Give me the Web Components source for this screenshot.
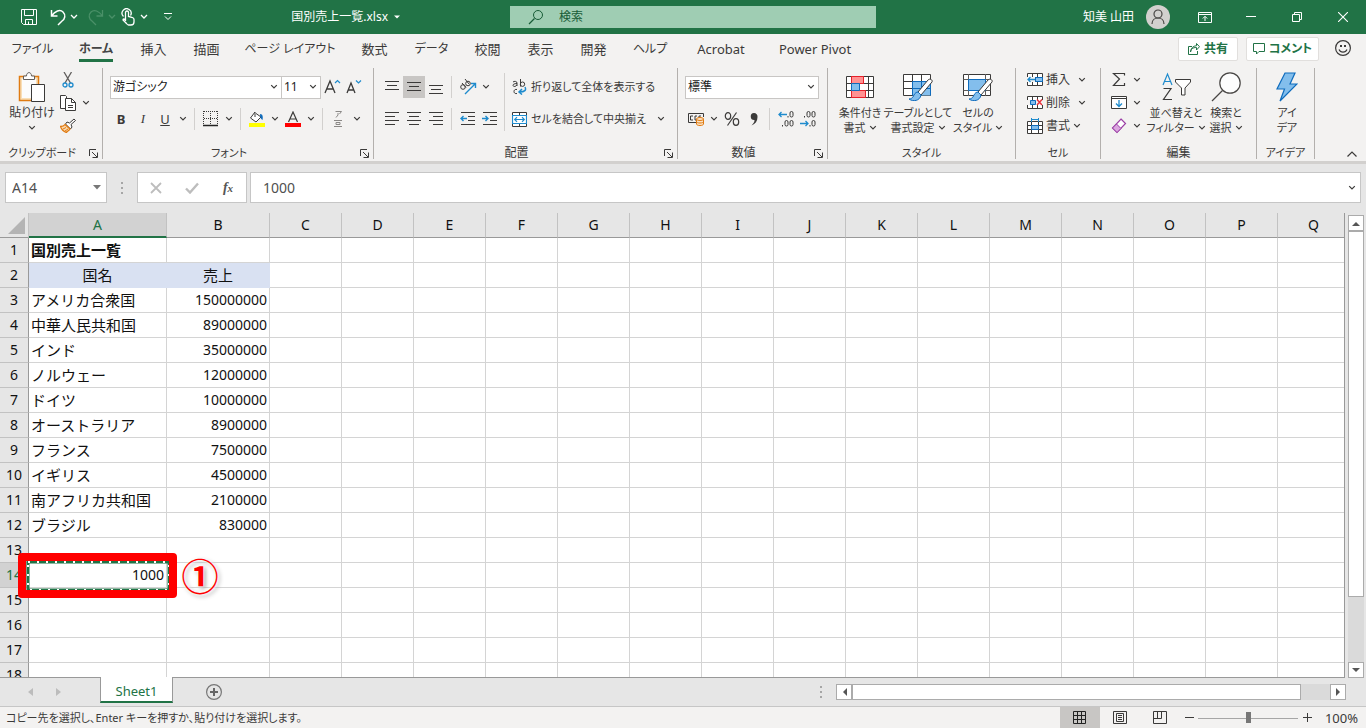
<!DOCTYPE html>
<html lang="ja">
<head>
<meta charset="utf-8">
<title>国別売上一覧.xlsx</title>
<style>
html, body { height: 100%; margin: 0; }
body {
  font: 12px/16px "Noto Sans", "Noto Sans CJK JP", sans-serif;
  font-feature-settings: "palt";
  color: #3b3a39;
  background: #e6e6e6;
  overflow: hidden;
}
</style>
</head>
<body>
<xl-app></xl-app>
<script>
const BASE = `
  *, *::before, *::after { box-sizing: border-box; }
  :host([hidden]) { display: none; }
  button, input, select { font: inherit; color: inherit; margin: 0; padding: 0; border: 0; background: none; border-radius: 0; outline: 0; }
  button { display: flex; align-items: center; justify-content: center; white-space: nowrap; flex: none; }
`;
function define(name, css, html, setup) {
  const tpl = document.createElement('template');
  tpl.innerHTML = `<style>${BASE}${css}</style>${html}`;
  customElements.define(name, class extends HTMLElement {
    constructor() {
      super();
      this.attachShadow({ mode: 'open' }).append(tpl.content.cloneNode(true));
    }
    connectedCallback() { if (setup) setup(this, this.shadowRoot); }
  });
}

const K = '#3b3a39', B = '#1e8bcd', LB = '#83beec', DB = '#0f6cbd';
const lines = (...rows) => rows.map(([x, w, y]) => `<path d="M${x} ${y}.5h${w}" stroke="${K}"/>`).join('');
const brush = `<path d="M27 7L17 19l3 3L31 9c1-2-2-4-4-2z" fill="#fff" stroke="${K}"/><path d="M17 19c-3 0-4 3-5 5-1 1-2 2-4 2 4 3 11 2 12-4z" fill="${LB}" stroke="${DB}"/>`;
const ICONS = {
  save: [16, 16, '<path d="M.5.5h15v15h-13l-2-2zM3.500 .5v6h9v-6M4.500 15.500v-5h7v5M7.500 12.500v3" fill="none" stroke="#fff"/>'],
  undo: [16, 18, '<path d="M1.500 2v6h6M1.500 8C5 3 10 1 13 4s2 7-1 9l-4 4" fill="none" stroke="#fff" stroke-width="1.500"/>'],
  redo: [16, 18, '<path d="M14.500 2v6h-6M14.500 8C11 3 6 1 3 4s-2 7 1 9l4 4" fill="none" stroke="#4a9068" stroke-width="1.300"/>'],
  touch: [14, 18, '<path d="M2.500 8.500a4.500 4.500 0 1 1 7-1M4.500 13V4.500a1.500 1.500 0 0 1 3 0v4l4 1q1.500.5 1.500 2V14q0 3-3 3H7.500q-1 0-2-1.500L2 12q0-2 2.500 0" fill="none" stroke="#fff" stroke-width="1.300"/>'],
  chevw: [8, 6, '<path d="M1 1l3 3 3-3" fill="none" stroke="#fff" stroke-width="1.300"/>'],
  chevd: [8, 6, '<path d="M1 1l3 3 3-3" fill="none" stroke="#4a9068" stroke-width="1.300"/>'],
  custom: [8, 8, '<path d="M0 .5h8" stroke="#fff"/><path d="M1 3.500l3 3 3-3" fill="none" stroke="#fff"/>'],
  tri: [6, 4, '<path d="M0 .5h6L3 3.500z" fill="#fff"/>'],
  search: [16, 16, '<circle cx="10" cy="6" r="4.500" fill="none" stroke="#185c37"/><path d="M6.500 9.500L1 15" stroke="#185c37" stroke-width="1.200"/>'],
  user: [24, 24, '<circle cx="12" cy="12" r="12" fill="#d2d0ce"/><circle cx="12" cy="9" r="4" fill="none" stroke="#484644" stroke-width="1.200"/><path d="M6 19c0-8 12-8 12 0" fill="none" stroke="#484644" stroke-width="1.200"/>'],
  ribbonopt: [14, 11, '<path d="M.5.5h13v10H.5zM.5 2.500h13M7 9V4.500M4.800 6.500L7 4.300l2.200 2.200" fill="none" stroke="#fff"/>'],
  min: [10, 10, '<path d="M0 4.500h10" stroke="#fff"/>'],
  restore: [10, 10, '<path d="M.5 2.500h7v7h-7zM2.500 2.500v-2h7v7h-2" fill="none" stroke="#fff"/>'],
  close: [10, 10, '<path d="M0 0l10 10M10 0L0 10" stroke="#fff" stroke-width="1.100"/>'],
  share: [12, 12, '<path d="M4 3.500H.5v8h9V8M2.500 9c.5-3 2-4.500 6-4.500V7l3-3.300L8.500.5v2.200C5 3 3 5 2.500 9z" fill="none" stroke="#217346"/>'],
  comment: [12, 12, '<path d="M.5.5h11v8H6L3.500 11V8.500h-3z" fill="none" stroke="#217346"/>'],
  smile: [16, 16, `<circle cx="8" cy="8" r="7.400" fill="none" stroke="${K}" stroke-width="1.200"/><path d="M5 5h2v2H5zM9 5h2v2H9z" fill="${K}"/><path d="M4 9.500c1.500 3.500 6.500 3.500 8 0" fill="none" stroke="${K}" stroke-width="1.200"/>`],
  chev: [8, 6, `<path d="M1.200 1.200L4 4l2.800-2.800" fill="none" stroke="${K}" stroke-width="1.200"/>`],
  up: [10, 6, `<path d="M.5 5.500L5 1l4.500 4.500" fill="none" stroke="${K}" stroke-width="1.200"/>`],
  launch: [9, 9, `<path d="M.5 7V.5H7M3 3l5 5M8.500 3.500v5h-5" fill="none" stroke="${K}"/>`],
  paste: [28, 30, `<path d="M1.500 4.500h19v24h-19z" fill="#f9dfb8" stroke="#e07b12" stroke-width="1.500"/><path d="M4 7h14v19H4z" fill="#fcfcfc"/><path d="M5.500 7.500V4h3c0-4.500 5-4.500 5 0h3v3.500z" fill="#fff" stroke="#605e5c"/><path d="M13.500 12.500h13v17h-13z" fill="#fff" stroke="${K}"/>`],
  cut: [12, 16, `<path d="M2 0l6.500 11M9.500 0L3 11" stroke="#605e5c" stroke-width="1.300" fill="none"/><circle cx="3" cy="13" r="2" fill="none" stroke="${B}" stroke-width="1.300"/><circle cx="9" cy="13" r="2" fill="none" stroke="${B}" stroke-width="1.300"/>`],
  copy: [16, 16, `<path d="M5.500 13.500h-5v-13h5l1 1v1.500" fill="#fff" stroke="${K}"/><path d="M5.500 3.500h6l4 4v8h-10z" fill="#fff" stroke="${K}"/><path d="M11.500 3.500v4h4M8 10.500h5M8 12.500h5" fill="none" stroke="${K}"/>`],
  painter: [16, 15, `<path d="M14 1L9.500 5 7 4 5.500 6l5 5L12 9l-1-2.500L15.500 2.500z" fill="#fff" stroke="${K}"/><path d="M5 6.500C4 8 2.500 8.500.5 8.500c1 3 3 5 6 6 0-1 3-2 3.500-3.500z" fill="#fbd9ae" stroke="#e07b12" stroke-width="1.300"/><path d="M3 11l3-1.500M5 13l3-2" stroke="#e07b12"/>`],
  grow: [17, 16, `<path d="M1 14L6 2l5 12M3 10h6" fill="none" stroke="${K}" stroke-width="1.300"/><path d="M11 4l2.500-2.500L16 4" fill="none" stroke="${B}" stroke-width="1.200"/>`],
  shrink: [16, 16, `<path d="M1 14L5 4l4 10M2.500 11h5" fill="none" stroke="${K}" stroke-width="1.300"/><path d="M10 1.500L12.500 4 15 1.500" fill="none" stroke="${B}" stroke-width="1.200"/>`],
  border: [16, 16, `<path d="M1 .5h14M1 7.500h14M.5 0v14M7.500 0v14M14.500 0v14" stroke="${K}" stroke-dasharray="1 1"/><path d="M0 14.500h15" stroke="#222" stroke-width="1.500"/>`],
  fill: [18, 16, `<path d="M7 1L2.500 7 8 11l5-5-5-3.500M7 1v5" fill="#fff" stroke="${K}"/><path d="M12 3c3 0 3 3 2.500 6-2-1-2.500-3-2.500-6z" fill="${DB}"/><path d="M1 12h16v4H1z" fill="#ff0"/>`],
  color: [16, 16, `<path d="M3.500 11L8 1l4.500 10M5 8h6" fill="none" stroke="${K}" stroke-width="1.200"/><path d="M0 12h16v4H0z" fill="red"/>`],
  ruby: [10, 18, '<path d="M1.500 1.500h6L5.500 4M4 3v2L2 7.500M0 10.500h8M2 12.500h4v2H2zM0 16.500h8" fill="none" stroke="#8a8886"/>'],
  top: [16, 16, lines([1, 14, 2], [3, 10, 6], [1, 14, 10])],
  mid: [16, 16, lines([1, 14, 3], [3, 10, 7], [1, 14, 11])],
  bot: [16, 16, lines([1, 14, 6], [3, 10, 10], [1, 14, 14])],
  left: [16, 16, lines([1, 14, 1], [1, 10, 5], [1, 14, 9], [1, 10, 13])],
  center: [16, 16, lines([1, 14, 1], [3, 10, 5], [1, 14, 9], [3, 10, 13])],
  right: [16, 16, lines([1, 14, 1], [5, 10, 5], [1, 14, 9], [5, 10, 13])],
  orient: [18, 16, `<circle cx="4" cy="8" r="2.300" fill="none" stroke="${K}"/><path d="M3 4l4 4.500M6 0l4 5" stroke="${K}"/><circle cx="9" cy="4.500" r="2.300" fill="none" stroke="${K}"/><path d="M6 15L16 5M12 4.500h4.500V9" fill="none" stroke="${B}" stroke-width="1.400"/>`],
  outdent: [16, 14, `${lines([1, 14, 0], [8, 7, 4], [8, 7, 8], [1, 14, 12])}<path d="M1 6.500h6M3.500 4L1 6.500 3.500 9" fill="none" stroke="${B}" stroke-width="1.400"/>`],
  indent: [16, 14, `${lines([1, 14, 0], [8, 7, 4], [8, 7, 8], [1, 14, 12])}<path d="M0 6.500h6M3.500 4L6 6.500 3.500 9" fill="none" stroke="${B}" stroke-width="1.400"/>`],
  wrap: [15, 16, `<path d="M1 3c1-1 4-1 4 1v3M5 4.500c-5 0-5 3-2 3l2-1.500M8.500 0v7.500" fill="none" stroke="${K}"/><circle cx="10.500" cy="5.200" r="2.200" fill="none" stroke="${K}"/><path d="M5 10.500c-4-1-4 5 0 4" fill="none" stroke="${K}"/><path d="M13 8c1.500 3 0 5-5.500 5M10 10l-3 3 3 2.500" fill="none" stroke="${B}" stroke-width="1.500"/>`],
  merge: [15, 15, `<path d="M.5.5h14v14H.5z" fill="#fff" stroke="${K}"/><path d="M7.500 0v4M7.500 11v4" stroke="${K}"/><path d="M.5 3.500h14v8H.5z" fill="#fff" stroke="${B}" stroke-width="1.200"/><path d="M3 7.500h9M5 5.200L2.700 7.500 5 9.800M10 5.200l2.300 2.300L10 9.800" fill="none" stroke="${B}" stroke-width="1.200"/>`],
  money: [17, 14, `<path d="M8 10.500H.5v-9h15V5" fill="none" stroke="${K}"/><path d="M5 4H2.500v4H5M9 8H7V4h2M13 4h-2v2" fill="none" stroke="${K}"/><path d="M8.500 7v5c0 2 7 2 7 0V7z" fill="#fce3c4" stroke="#e07b12"/><ellipse cx="12" cy="7" rx="3.500" ry="1.500" fill="#fce3c4" stroke="#e07b12"/><path d="M8.500 9.500c0 2 7 2 7 0" fill="none" stroke="#e07b12"/>`],
  comma: [10, 14, `<path d="M5 1a3.500 3.500 0 0 1 3.500 4c0 4-2 7-6 8.500 2-2 3-3.500 3-5.500A3.500 3.500 0 1 1 5 1z" fill="${K}"/>`],
  percent: [16, 16, `<ellipse cx="4" cy="5" rx="2.700" ry="3.300" fill="none" stroke="${K}" stroke-width="1.200"/><ellipse cx="12" cy="11" rx="2.700" ry="3.300" fill="none" stroke="${K}" stroke-width="1.200"/><path d="M12.500 1.500l-9 13" stroke="${K}" stroke-width="1.200"/>`],
  decinc: [16, 16, `<path d="M1 3.500h8M3.500 1L1 3.500 3.500 6" fill="none" stroke="${B}" stroke-width="1.300"/><rect x="12" y=".5" width="3" height="5.500" rx="1.500" fill="none" stroke="${K}"/><rect x="7" y="9.500" width="3" height="5.500" rx="1.500" fill="none" stroke="${K}"/><rect x="12" y="9.500" width="3" height="5.500" rx="1.500" fill="none" stroke="${K}"/><path d="M4 14h1v1.500H4zM9.500 5h1v1.500h-1z" fill="${K}"/>`],
  decdec: [16, 16, `<path d="M0 12.500h8M5.500 10L8 12.500 5.500 15" fill="none" stroke="${B}" stroke-width="1.300"/><rect x="7" y=".5" width="3" height="5.500" rx="1.500" fill="none" stroke="${K}"/><rect x="12" y=".5" width="3" height="5.500" rx="1.500" fill="none" stroke="${K}"/><rect x="12" y="9.500" width="3" height="5.500" rx="1.500" fill="none" stroke="${K}"/><path d="M4 5h1v1.500H4zM9.500 14h1v1.500h-1z" fill="${K}"/>`],
  cond: [28, 24, `<path d="M.5 1.500h27v21H.5z" fill="#fff" stroke="${K}"/><path d="M5.500 1v22M22.500 1v22M.5 8.500h27M.5 15.500h27" stroke="${K}"/><path d="M5.500 1.500h12v7h-12zM5.500 15.500h14v7h-14z" fill="#ff9292" stroke="#e8202a"/><path d="M5.500 8.500h8v7h-8z" fill="${LB}" stroke="${DB}"/>`],
  table: [34, 28, `<path d="M2.500 1.500h27v21h-27z" fill="#fff" stroke="${K}"/><path d="M11.500 8.500h18v14h-18z" fill="${LB}"/><path d="M11.500 1v22M20.500 1v7M2.500 8.500h9M2.500 15.500h9" stroke="${K}"/><path d="M11.500 22.500v-14h18v14M20.500 8.500v14M11.500 15.500h18" stroke="${DB}" fill="none"/>${brush}`],
  style: [34, 28, `<path d="M2.500 1.500h27v21h-27z" fill="#fff" stroke="${K}"/><path d="M2.500 6.500h27M2.500 17.500h27M7.500 1v22M24.500 1v22" stroke="#605e5c"/><path d="M7.500 6.500h17v11h-17z" fill="${LB}" stroke="${DB}"/>${brush}`],
  ins: [16, 15, `<path d="M.5 1.500h15v12H.5zM.5 5.500h15M.5 9.500h15M5.500 1v12M10.500 1v12" fill="#fff" stroke="${K}"/><path d="M8.500 5.500h7v4h-7z" fill="${LB}" stroke="${DB}"/><path d="M0 5h8v5H0z" fill="#f3f2f1"/><path d="M1 7.500h7M3.500 5L1 7.500 3.500 10" fill="none" stroke="${B}" stroke-width="1.300"/>`],
  del: [16, 15, `<path d="M.5 1.500h15v12H.5zM.5 5.500h15M.5 9.500h15M5.500 1v12M10.500 1v12" fill="#fff" stroke="${K}"/><path d="M0 5h16v5H0z" fill="#f3f2f1"/><path d="M3.500 5.500h5v4h-5z" fill="${LB}" stroke="${DB}"/><path d="M10 4.500l5 5.500M15 4.500L10 10" stroke="#e8303a" stroke-width="1.400"/>`],
  fmt: [16, 16, `<path d="M.5 3.500h15v12H.5zM.5 7.500h15M.5 11.500h15M4.500 3v12M11.500 3v12" fill="#fff" stroke="${K}"/><path d="M4.500 7.500h7v4h-7z" fill="${LB}" stroke="${DB}"/><path d="M4 1.500h8M4.500 0v4M11.500 0v4" stroke="${B}"/>`],
  sum: [14, 15, `<path d="M12.500 3.500v-2h-11L7.500 7l-6 6.500h11v-2.500" fill="none" stroke="${K}" stroke-width="1.200"/>`],
  down: [16, 15, `<path d="M.5 1.500h15v12H.5zM.5 3.500h15" fill="#fff" stroke="${K}"/><path d="M8 5v6.500M5 8.500l3 3 3-3" fill="none" stroke="${B}" stroke-width="1.300"/>`],
  erase: [16, 16, '<path d="M10 1l4.500 4.500-8.500 9L1.500 10z" fill="#fff" stroke="#9b3fa5" stroke-width="1.200"/><path d="M5.500 6l4.500 4.500-4 4L1.500 10z" fill="#dba6e0" stroke="#9b3fa5"/>'],
  sort: [30, 30, `<path d="M2 13L6.500 2 11 13M3.500 9.500h6" fill="none" stroke="${B}" stroke-width="1.200"/><path d="M2.500 16.500H10L2.500 27.500H11" fill="none" stroke="${K}" stroke-width="1.200"/><path d="M14.500 7.500h15v2.500L24 16v7h-3.500v-7L14.500 10z" fill="#fff" stroke="${K}"/>`],
  find: [30, 30, `<circle cx="19" cy="11" r="10.200" fill="#fdfdfd" stroke="#484644" stroke-width="1.200"/><path d="M11.500 18.500L1 29" stroke="#484644" stroke-width="1.300"/>`],
  idea: [22, 30, `<path d="M9 1h10l-5 11h7L4 29l4.500-12H1z" fill="${LB}" stroke="${DB}" stroke-width="1.200"/>`],
  nbtri: [8, 5, '<path d="M0 0h8L4 4.500z" fill="#777"/>'],
  dots: [3, 12, '<path d="M0 0h2v2H0zM0 5h2v2H0zM0 10h2v2H0z" fill="#a6a6a6"/>'],
  cancel: [12, 12, '<path d="M1 1l10 10M11 1L1 11" stroke="#bdbdbd" stroke-width="1.800"/>'],
  check: [14, 12, '<path d="M1 6.500L5 10.500 13 1.500" fill="none" stroke="#bdbdbd" stroke-width="2.400"/>'],
  corner: [17, 17, '<path d="M17 0v17H0z" fill="#b4b4b4"/>'],
  navl: [5, 8, '<path d="M5 0v8L0 4z" fill="#bcbcbc"/>'],
  navr: [5, 8, '<path d="M0 0v8l5-4z" fill="#bcbcbc"/>'],
  sl: [5, 8, '<path d="M5 0v8L1 4z" fill="#555"/>'],
  sr: [5, 8, '<path d="M0 0v8l4-4z" fill="#555"/>'],
  su: [8, 5, '<path d="M0 5h8L4 1z" fill="#555"/>'],
  sd: [8, 5, '<path d="M0 0h8L4 4z" fill="#555"/>'],
  add: [16, 16, '<circle cx="8" cy="8" r="7.400" fill="none" stroke="#777" stroke-width="1.200"/><path d="M4 8h8M8 4v8" stroke="#666" stroke-width="2"/>'],
  vnorm: [14, 14, '<path d="M.5.5h12v12H.5zM.5 4.500h12M.5 8.500h12M4.500.5v12M8.500.5v12" fill="none" stroke="#222"/>'],
  vpage: [14, 14, `<path d="M.5.5h13v12H.5zM3.500 2.500h7v8h-7zM5 4.500h4M5 6.500h4M5 8.500h4" fill="none" stroke="${K}"/>`],
  vbreak: [14, 14, `<path d="M.5.5h13v12H.5zM.5 7.500h8v-7M4.500.5v7" fill="none" stroke="${K}"/>`],
  minus: [9, 9, `<path d="M0 4.500h9" stroke="${K}"/>`],
  plus: [9, 9, `<path d="M0 4.500h9M4.500 0v9" stroke="${K}"/>`],
};
customElements.define('xl-icon', class extends HTMLElement {
  constructor() { super(); this.attachShadow({ mode: 'open' }); }
  connectedCallback() {
    const [w, h, body] = ICONS[this.getAttribute('name')];
    this.shadowRoot.innerHTML = `<style>:host{display:block;flex:none}svg{display:block}</style>
      <svg width="${w}" height="${h}" viewBox="0 0 ${w} ${h}" aria-hidden="true">${body}</svg>`;
  }
});
const icon = n => `<xl-icon name="${n}"></xl-icon>`;
const btn = (n, label, cls = '') => `<button type="button" class="b ${cls}" aria-label="${label}">${icon(n)}</button>`;
const drop = (label, n = 'chev') => `<button type="button" class="c" aria-label="${label}">${icon(n)}</button>`;

/* Title bar */
define('xl-titlebar', `
  :host { display: grid; grid-template-columns: 510px minmax(0, 366px) 1fr; height: 34px; background: #217346; color: #fff; align-items: center; }
  .left, .qat, .set, .right { display: flex; align-items: center; }
  .left { justify-content: space-between; padding: 0 110px 0 19px; }
  .qat { gap: 6px; }
  .b { width: 20px; height: 24px; }
  .c { width: 12px; height: 24px; }
  .qat > .b { margin-right: 3px; }
  .qat > .c { margin-left: 6px; }
  .file { gap: 6px; }
  .search { display: flex; align-items: center; gap: 15px; height: 22px; padding: 0 18px; background: #9fcdb3; color: #185c37; }
  .search input { flex: 1; min-width: 0; }
  .search input::placeholder { color: #185c37; opacity: 1; }
  .right { justify-content: flex-end; }
  .user { gap: 12px; margin-right: 12px; }
  .w { width: 46px; height: 34px; }
`, `
  <div class="left">
    <div class="qat">${btn('save', '上書き保存')}<span class="set">${btn('undo', '元に戻す')}${drop('元に戻す一覧', 'chevw')}</span><span class="set">${btn('redo', 'やり直し')}${drop('やり直し一覧', 'chevd')}${btn('touch', 'タッチ/マウス モード')}${drop('モード一覧', 'chevw')}</span>${drop('クイック アクセスのカスタマイズ', 'custom')}</div>
    <button type="button" class="file">国別売上一覧.xlsx ${icon('tri')}</button>
  </div>
  <label class="search">${icon('search')}<input type="search" placeholder="検索" aria-label="検索"></label>
  <div class="right">
    <button type="button" class="user">知美 山田 ${icon('user')}</button>
    <button type="button" class="w" aria-label="リボンの表示オプション">${icon('ribbonopt')}</button>
    <button type="button" class="w" aria-label="最小化">${icon('min')}</button>
    <button type="button" class="w" aria-label="元に戻す">${icon('restore')}</button>
    <button type="button" class="w" aria-label="閉じる">${icon('close')}</button>
  </div>
`);

/* Ribbon tabs */
define('xl-tabs', `
  :host { display: flex; justify-content: space-between; height: 32px; background: #f3f2f1; font-size: 13px; }
  nav { display: grid; grid-template-columns: 65px 62px 53px 53px 114px 55px 59px 53px 53px 53px 60px 82px 106px; }
  nav a { display: flex; justify-content: center; color: inherit; text-decoration: none; white-space: nowrap; padding-top: 7px; }
  nav a.k { font-size: 12px; }
  nav a.on { font-weight: 700; color: #444; }
  nav a.on span { border-bottom: 3px solid #217346; height: 21px; }
  .act { display: flex; align-items: center; gap: 8px; padding: 0 15px 2px 0; }
  .act button { width: 60px; height: 24px; gap: 4px; background: #fff; border: 1px solid #e1dfdd; border-radius: 2px; color: #217346; font-weight: 700; font-size: 12px; }
  .act .cm { width: 73px; }
  .act button:last-child { background: none; border: 0; width: auto; padding: 0 0 2px 8px; }
`, `
  <nav><a href="#file" class="k"><span>ファイル</span></a><a href="#home" class="k on"><span>ホーム</span></a><a href="#insert"><span>挿入</span></a><a href="#draw"><span>描画</span></a><a href="#layout" class="k"><span>ページ レイアウト</span></a><a href="#formula"><span>数式</span></a><a href="#data" class="k"><span>データ</span></a><a href="#review"><span>校閲</span></a><a href="#view"><span>表示</span></a><a href="#dev"><span>開発</span></a><a href="#help" class="k"><span>ヘルプ</span></a><a href="#acrobat"><span>Acrobat</span></a><a href="#pivot"><span>Power Pivot</span></a></nav>
  <div class="act"><button type="button">${icon('share')}共有</button><button type="button" class="cm">${icon('comment')}コメント</button><button type="button" aria-label="フィードバック">${icon('smile')}</button></div>
`);

/* Ribbon group: content slot over a caption */
define('xl-group', `
  :host { display: flex; flex-direction: column; flex: none; border-right: 1px solid #b3b0ad; height: 91px; }
  .body { flex: 1; display: flex; min-height: 0; padding: 0 7px; }
  .cap { display: flex; align-items: center; height: 12px; line-height: 12px; white-space: nowrap; }
  .cap.k { font-size: 11px; }
  .cap span { flex: 1; text-align: center; }
  .cap button { width: 18px; }
`, `<div class="body"><slot></slot></div><div class="cap"><span></span><button type="button" aria-label="詳細">${icon('launch')}</button></div>`,
(host, root) => {
  const label = host.getAttribute('label');
  root.querySelector('span').textContent = label;
  root.querySelector('.cap').classList.toggle('k', /^[ァ-ー]+$/.test(label));
  if (!host.hasAttribute('launcher')) root.querySelector('button')?.remove();
});

const combo = (id, label, text, cls) => `<span class="sel ${cls}"><select id="${id}" aria-label="${label}"><option>${text}</option></select>${icon('chev')}</span>`;
const big = (w, name, a, b, arrow = true) => `<button type="button" class="big ${w}"><span class="ic">${icon(name)}</span><span class="ln">${a}</span><span class="ln">${b}${arrow ? icon('chev') : ''}</span></button>`;
define('xl-ribbon', `
  :host { display: flex; justify-content: space-between; align-items: flex-end; background: #f3f2f1; padding-top: 2px; height: 98px; border-bottom: 3px solid #d2d0ce; }
  .groups { display: flex; height: 100%; }
  .row { display: flex; align-items: center; height: 24px; }
  .rows { display: flex; flex-direction: column; gap: 8px; padding-top: 7px; }
  .b { width: 22px; height: 22px; }
  .b.on { background: #c8c6c4; }
  .c { width: 14px; height: 22px; }
  .s { width: 1px; height: 22px; margin: 0 5px 0 4px; background: #d2d0ce; }
  .tall { height: 58px; margin: 5px 7px 0 3px; }
  .sel { display: flex; align-items: center; height: 23px; border: 1px solid #c8c6c4; background: #fff; padding-right: 3px; }
  .sel select { appearance: none; flex: 1; min-width: 0; padding-left: 2px; height: 100%; color: #222; }
  .big { flex-direction: column; justify-content: flex-start; line-height: 15px; font-size: 11px; }
  .big .ic { display: flex; align-items: center; justify-content: center; height: 37px; }
  .big .ln { display: flex; align-items: center; gap: 3px; height: 15px; }
  .w46 { width: 46px; } .w50 { width: 50px; } .w54 { width: 54px; } .w66 { width: 66px; }
  .mini { display: flex; flex-direction: column; }
  .mini .row { height: 23px; }
  .cells { padding-left: 4px; }
  .cells .row { gap: 5px; }
  .edit { width: 41px; }
  .t { gap: 3px; }
  .t.k { font-size: 11px; gap: 4px; margin-right: 8px; }
  .name { width: 172px; } .size { width: 40px; margin-left: -1px; } .num { width: 134px; }
  .glyph { font-size: 13px; }
  .collapse { width: 28px; height: 14px; }
`, `
  <div class="groups">
    <xl-group label="クリップボード" launcher style="width:103px">
      <button type="button" class="big w50" style="font-size:12px"><span class="ic">${icon('paste')}</span><span class="ln">貼り付け</span><span class="ln">${icon('chev')}</span></button>
      <div class="mini"><div class="row">${btn('cut', '切り取り')}</div><div class="row">${btn('copy', 'コピー')}${drop('コピー一覧')}</div><div class="row">${btn('painter', '書式のコピー/貼り付け')}</div></div>
    </xl-group>
    <xl-group label="フォント" launcher style="width:271px">
      <div class="rows">
        <div class="row">${combo('fn', 'フォント名', '游ゴシック', 'name')}${combo('fs', 'サイズ', '11', 'size')}${btn('grow', 'フォント サイズの拡大')}${btn('shrink', 'フォント サイズの縮小')}</div>
        <div class="row"><button type="button" class="b glyph"><b>B</b></button><button type="button" class="b glyph" style="font-family:'Liberation Serif'"><i>I</i></button><button type="button" class="b glyph"><u>U</u></button>${drop('下線')}<i class="s"></i>${btn('border', '罫線')}${drop('罫線一覧')}<i class="s"></i>${btn('fill', '塗りつぶしの色')}${drop('塗りつぶしの色一覧')}${btn('color', 'フォントの色')}${drop('フォントの色一覧')}<i class="s"></i>${btn('ruby', 'ふりがな')}${drop('ふりがな一覧')}</div>
      </div>
    </xl-group>
    <xl-group label="配置" launcher style="width:304px">
      <div class="rows">
        <div class="row">${btn('top', '上揃え')}${btn('mid', '上下中央揃え', 'on')}${btn('bot', '下揃え')}<i class="s"></i>${btn('orient', '方向')}${drop('方向一覧')}</div>
        <div class="row">${btn('left', '左揃え')}${btn('center', '中央揃え')}${btn('right', '右揃え')}<i class="s"></i>${btn('outdent', 'インデントを減らす')}${btn('indent', 'インデントを増やす')}</div>
      </div>
      <i class="s tall"></i>
      <div class="rows">
        <div class="row"><button type="button" class="t k">${icon('wrap')}折り返して全体を表示する</button></div>
        <div class="row"><button type="button" class="t k">${icon('merge')}セルを結合して中央揃え</button>${drop('結合一覧')}</div>
      </div>
    </xl-group>
    <xl-group label="数値" launcher style="width:150px">
      <div class="rows">
        <div class="row">${combo('nf', '表示形式', '標準', 'num')}</div>
        <div class="row">${btn('money', '通貨表示形式')}${drop('通貨一覧')}${btn('percent', 'パーセント スタイル')}${btn('comma', '桁区切りスタイル')}<i class="s"></i>${btn('decinc', '小数点以下の表示桁数を増やす')}${btn('decdec', '小数点以下の表示桁数を減らす')}</div>
      </div>
    </xl-group>
    <xl-group label="スタイル" style="width:188px">${big('w50', 'cond', '条件付き', '書式')}${big('w66', 'table', 'テーブルとして', '書式設定')}${big('w54', 'style', 'セルの', 'スタイル')}</xl-group>
    <xl-group label="セル" style="width:85px">
      <div class="mini cells">
        <div class="row"><button type="button" class="t">${icon('ins')}挿入</button>${drop('挿入一覧')}</div>
        <div class="row"><button type="button" class="t">${icon('del')}削除</button>${drop('削除一覧')}</div>
        <div class="row"><button type="button" class="t">${icon('fmt')}書式${icon('chev')}</button></div>
      </div>
    </xl-group>
    <xl-group label="編集" style="width:156px">
      <div class="mini edit"><div class="row">${btn('sum', '合計')}${drop('合計一覧')}</div><div class="row">${btn('down', 'フィル')}${drop('フィル一覧')}</div><div class="row">${btn('erase', 'クリア')}${drop('クリア一覧')}</div></div>
      ${big('w54', 'sort', '並べ替えと', 'フィルター')}${big('w46', 'find', '検索と', '選択')}
    </xl-group>
    <xl-group label="アイデア" style="width:58px">${big('w46', 'idea', 'アイ', 'デア', false)}</xl-group>
  </div>
  <button type="button" class="collapse" aria-label="リボンを折りたたむ">${icon('up')}</button>
`);

/* Formula bar */
define('xl-formula-bar', `
  :host { display: flex; align-items: center; height: 49px; padding: 0 5px 2px; background: #e6e6e6; font-size: 14px; color: #505050; }
  .box { display: flex; align-items: center; height: 31px; background: #fff; border: 1px solid #c6c6c6; }
  .box input { flex: 1; min-width: 0; height: 100%; }
  .name { width: 102px; padding: 0 5px 0 6px; }
  .dots { width: 30px; display: flex; justify-content: center; }
  .fx { width: 110px; margin-right: 3px; }
  .fx button { width: 36px; height: 29px; }
  .fx i { font: italic 700 14px/16px "Liberation Serif", serif; color: #555; }
  .fx small { font-size: 11px; }
  .val { flex: 1; padding: 0 4px 0 12px; }
`, `
  <span class="box name"><input id="nb" value="A14" aria-label="名前ボックス">${icon('nbtri')}</span>
  <span class="dots">${icon('dots')}</span>
  <span class="box fx"><button type="button" aria-label="キャンセル">${icon('cancel')}</button><button type="button" aria-label="入力">${icon('check')}</button><button type="button" aria-label="関数の挿入"><i>f<small>x</small></i></button></span>
  <span class="box val"><input id="fv" value="1000" aria-label="数式バー">${icon('chev')}</span>
`);

/* Worksheet grid */
const ROWS = [
  ['アメリカ合衆国', '150000000'], ['中華人民共和国', '89000000'], ['インド', '35000000'], ['ノルウェー', '12000000'],
  ['ドイツ', '10000000'], ['オーストラリア', '8900000'], ['フランス', '7500000'], ['イギリス', '4500000'],
  ['南アフリカ共和国', '2100000'], ['ブラジル', '830000'],
];
const COLS = [...'ABCDEFGHIJKLMNOPQ'];
const rest = '<td></td>'.repeat(COLS.length - 2);
function cells(n) {
  if (n === 1) return `<td class="ttl">国別売上一覧</td><td></td>`;
  if (n === 2) return `<td class="hd">国名</td><td class="hd">売上</td>`;
  if (n <= 12) return `<td>${ROWS[n - 3][0]}</td><td class="n">${ROWS[n - 3][1]}</td>`;
  if (n === 14) return `<td class="n cur">1000<xl-selection></xl-selection></td><td></td>`;
  return '<td></td><td></td>';
}
define('xl-selection', `
  :host { position: absolute; inset: -2px; pointer-events: none; }
  svg { position: absolute; inset: 0; width: 100%; height: 100%; overflow: visible; }
  .frame { position: absolute; inset: -8px -9px -9px; border: 8px solid #f00; border-radius: 4px; }
  .mark { position: absolute; left: 100%; top: 50%; margin: -20px 0 0 12px; width: 40px; text-align: center; font: 700 37px/40px "Noto Sans CJK JP", sans-serif; color: #f00; text-shadow: 0 0 3px #fff, 0 0 3px #fff, 2px 2px 4px #999; }
`, `
  <svg aria-hidden="true"><rect x="1" y="1" width="100%" height="100%" fill="none" stroke="#217346" stroke-width="3"/><rect x="1" y="1" width="100%" height="100%" fill="none" stroke="#fff" stroke-width="2" stroke-dasharray="2 7"/></svg>
  <div class="frame"></div><span class="mark">①</span>
`);
define('xl-grid', `
  :host { display: block; flex: 1; min-width: 0; overflow: hidden; background: #fff; border-right: 1px solid #999; border-bottom: 1px solid #999; font-feature-settings: normal; font-size: 14px; color: #111; }
  table { table-layout: fixed; border-collapse: separate; border-spacing: 0; width: 1350px; }
  col.h { width: 29px; } col.a { width: 138px; } col.b { width: 103px; } col.x { width: 72px; }
  th, td { height: 25px; padding: 0; border: 0 solid #d4d4d4; border-width: 0 1px 1px 0; white-space: nowrap; line-height: 20px; }
  th { background: #e6e6e6; font-weight: 400; }
  thead th { border-color: #c2c2c2; border-bottom-color: #999; }
  thead th.on { background: #d2d2d2; color: #217346; border-bottom: 2px solid #217346; }
  tbody th { border-right-color: #999; border-bottom-color: #c2c2c2; }
  tbody th.on { background: #d2d2d2; color: #217346; }
  thead th:first-child xl-icon { margin-left: 8px; }
  td { font-size: 15px; padding: 0 2px; }
  .ttl { font-weight: 700; }
  .hd { background: #d9e1f2; border-color: #d9e1f2; text-align: center; }
  .n { font-size: 14px; text-align: right; }
  .cur { position: relative; }
`, `
  <table><colgroup><col class="h"><col class="a"><col class="b">${'<col class="x">'.repeat(15)}</colgroup>
  <thead><tr><th aria-label="すべて選択">${icon('corner')}</th>${COLS.map(c => `<th scope="col"${c === 'A' ? ' class="on"' : ''}>${c}</th>`).join('')}</tr></thead>
  <tbody>${Array.from({ length: 18 }, (_, i) => `<tr><th scope="row"${i === 13 ? ' class="on"' : ''}>${i + 1}</th>${cells(i + 1)}${rest}</tr>`).join('')}</tbody></table>
`);

/* Scroll bar, horizontal unless it has the vertical attribute */
define('xl-scroll', `
  :host { display: flex; background: #dadada; flex: none; height: 16px; }
  :host([vertical]) { flex-direction: column; width: 16px; height: auto; }
  button { width: 16px; height: 16px; background: #fff; border: 1px solid #ababab; }
  .track { flex: 1; min-width: 0; min-height: 0; display: flex; }
  .thumb { width: 94%; background: #fff; border: 1px solid #ababab; }
  :host([vertical]) .thumb { width: 100%; height: 85%; }
`, `<button type="button" aria-label="前へ"></button><div class="track"><div class="thumb"></div></div><button type="button" aria-label="次へ"></button>`,
(host, root) => {
  const v = host.hasAttribute('vertical'), [a, b] = root.querySelectorAll('button');
  a.innerHTML = icon(v ? 'su' : 'sl');
  b.innerHTML = icon(v ? 'sd' : 'sr');
});

/* Sheet tabs */
define('xl-sheet-bar', `
  :host { display: flex; justify-content: space-between; height: 28px; background: #e6e6e6; }
  .l, .r { display: flex; align-items: center; }
  .nav { width: 28px; height: 28px; }
  .tabs { display: flex; padding-left: 16px; }
  .tab { width: 73px; height: 26px; margin: -1px 27px 3px 28px; padding-top: 4px; background: #fff; border: 1px solid #999; border-width: 0 1px; border-bottom: 2px solid #217346; color: #217346; font: 13px/20px "Noto Sans", sans-serif; position: relative; }
  .r { gap: 13px; padding-right: 20px; }
  xl-scroll { width: 510px; }
`, `
  <div class="l"><div class="tabs"><button type="button" class="nav" aria-label="前のシート">${icon('navl')}</button><button type="button" class="nav" aria-label="次のシート">${icon('navr')}</button></div><button type="button" class="tab">Sheet1</button><button type="button" class="nav" aria-label="新しいシート">${icon('add')}</button></div>
  <div class="r">${icon('dots')}<xl-scroll></xl-scroll></div>
`);

/* Status bar */
define('xl-status', `
  :host { display: flex; justify-content: space-between; height: 22px; background: #f3f2f1; border-top: 1px solid #c6c6c6; padding: 0 8px 0 6px; align-items: center; }
  .msg { font-size: 11px; }
  .r { display: flex; align-items: center; }
  .v { width: 40px; height: 21px; }
  .v.on { background: #c8c6c4; }
  .z { width: 18px; height: 21px; }
  input { appearance: none; width: 100px; height: 12px; background: linear-gradient(#a6a6a6, #a6a6a6) 0 6px / 100% 1px no-repeat; }
  input::-webkit-slider-thumb { appearance: none; width: 5px; height: 11px; background: #777; }
  output { width: 42px; text-align: right; font-size: 13px; }
`, `
  <span class="msg">コピー先を選択し、Enter キーを押すか、貼り付けを選択します。</span>
  <div class="r"><button type="button" class="v on" aria-label="標準">${icon('vnorm')}</button><button type="button" class="v" aria-label="ページ レイアウト">${icon('vpage')}</button><button type="button" class="v" aria-label="改ページ プレビュー">${icon('vbreak')}</button><button type="button" class="z" aria-label="縮小">${icon('minus')}</button><input id="zoom" type="range" min="0" max="200" value="100" aria-label="ズーム"><button type="button" class="z" aria-label="拡大">${icon('plus')}</button><output for="zoom">100%</output></div>
`);

define('xl-app', `
  :host { display: flex; flex-direction: column; height: 100vh; min-height: 0; }
  main { flex: 1; min-height: 0; display: flex; gap: 3px; padding-right: 2px; background: #e6e6e6; }
  xl-scroll { margin-top: 2px; }
`, `
  <xl-titlebar></xl-titlebar><xl-tabs></xl-tabs><xl-ribbon></xl-ribbon><xl-formula-bar></xl-formula-bar>
  <main><xl-grid></xl-grid><xl-scroll vertical></xl-scroll></main>
  <xl-sheet-bar></xl-sheet-bar><xl-status></xl-status>
`);
</script>
</body>
</html>
